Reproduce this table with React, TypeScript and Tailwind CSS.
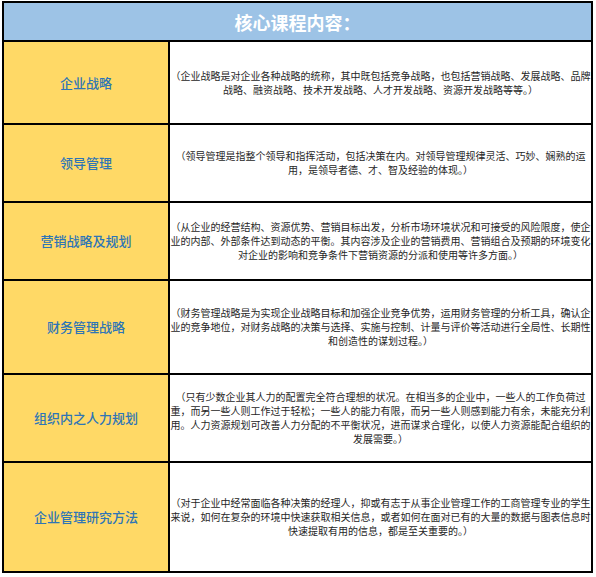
import React from "react";

const rows: { label: string; lines: string[]; h: string }[] = [
  {
    label: "企业战略",
    h: "h-[83px]",
    lines: [
      "（企业战略是对企业各种战略的统称，其中既包括竞争战略，也包括营销战略、发展战略、品牌",
      "战略、融资战略、技术开发战略、人才开发战略、资源开发战略等等。）",
    ],
  },
  {
    label: "领导管理",
    h: "h-[78px]",
    lines: [
      "（领导管理是指整个领导和指挥活动，包括决策在内。对领导管理规律灵活、巧妙、娴熟的运",
      "用，是领导者德、才、智及经验的体现。）",
    ],
  },
  {
    label: "营销战略及规划",
    h: "h-[78px]",
    lines: [
      "（从企业的经营结构、资源优势、营销目标出发，分析市场环境状况和可接受的风险限度，使企",
      "业的内部、外部条件达到动态的平衡。其内容涉及企业的营销费用、营销组合及预期的环境变化",
      "对企业的影响和竞争条件下营销资源的分派和使用等许多方面。）",
    ],
  },
  {
    label: "财务管理战略",
    h: "h-[94px]",
    lines: [
      "（财务管理战略是为实现企业战略目标和加强企业竞争优势，运用财务管理的分析工具，确认企",
      "业的竞争地位，对财务战略的决策与选择、实施与控制、计量与评价等活动进行全局性、长期性",
      "和创造性的谋划过程。）",
    ],
  },
  {
    label: "组织内之人力规划",
    h: "h-[88px]",
    lines: [
      "（只有少数企业其人力的配置完全符合理想的状况。在相当多的企业中，一些人的工作负荷过",
      "重，而另一些人则工作过于轻松；一些人的能力有限，而另一些人则感到能力有余，未能充分利",
      "用。人力资源规划可改善人力分配的不平衡状况，进而谋求合理化，以使人力资源能配合组织的",
      "发展需要。）",
    ],
  },
  {
    label: "企业管理研究方法",
    h: "h-[110px]",
    lines: [
      "（对于企业中经常面临各种决策的经理人，抑或有志于从事企业管理工作的工商管理专业的学生",
      "来说，如何在复杂的环境中快速获取相关信息，或者如何在面对已有的大量的数据与图表信息时",
      "快速提取有用的信息，都是至关重要的。）",
    ],
  },
];

export default function App() {
  return (
    <div
      className="w-[596px] h-[577px] bg-white pt-[1px] pl-[2px]"
      style={{ fontFamily: '"Noto Sans CJK SC", "Noto Sans", sans-serif' }}
    >
      <div className="w-[591px] border-2 border-black flex flex-col">
        <div className="h-[37px] bg-[#9dc3e6] flex items-center justify-center text-white text-[18px] font-bold leading-none">
          核心课程内容：
        </div>
        {rows.map((r) => (
          <div key={r.label} className={`flex border-t-2 border-black ${r.h}`}>
            <div className="w-[166px] shrink-0 border-r-2 border-black bg-[#ffd966] flex items-center justify-center text-[13px] font-medium text-[#2e75b6]">
              {r.label}
            </div>
            <div className="flex-1 flex flex-col items-center justify-center text-[10px] leading-[14px] text-[#262626] whitespace-nowrap">
              {r.lines.map((l, i) => (
                <div key={i}>{l}</div>
              ))}
            </div>
          </div>
        ))}
      </div>
    </div>
  );
}
